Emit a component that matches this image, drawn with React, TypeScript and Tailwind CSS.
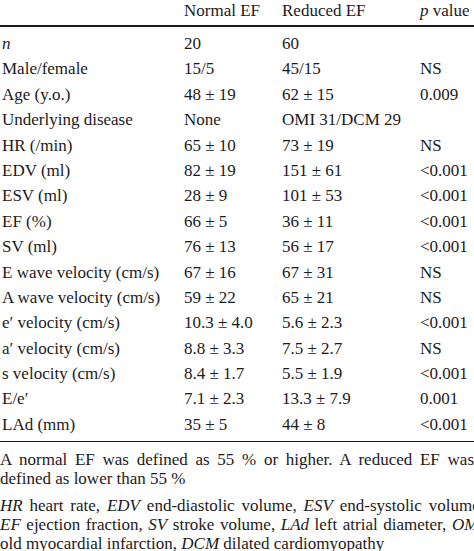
const rows: [string, string, string, string][] = [
  ["n", "20", "60", ""],
  ["Male/female", "15/5", "45/15", "NS"],
  ["Age (y.o.)", "48 ± 19", "62 ± 15", "0.009"],
  ["Underlying disease", "None", "OMI 31/DCM 29", ""],
  ["HR (/min)", "65 ± 10", "73 ± 19", "NS"],
  ["EDV (ml)", "82 ± 19", "151 ± 61", "<0.001"],
  ["ESV (ml)", "28 ± 9", "101 ± 53", "<0.001"],
  ["EF (%)", "66 ± 5", "36 ± 11", "<0.001"],
  ["SV (ml)", "76 ± 13", "56 ± 17", "<0.001"],
  ["E wave velocity (cm/s)", "67 ± 16", "67 ± 31", "NS"],
  ["A wave velocity (cm/s)", "59 ± 22", "65 ± 21", "NS"],
  ["e′ velocity (cm/s)", "10.3 ± 4.0", "5.6 ± 2.3", "<0.001"],
  ["a′ velocity (cm/s)", "8.8 ± 3.3", "7.5 ± 2.7", "NS"],
  ["s velocity (cm/s)", "8.4 ± 1.7", "5.5 ± 1.9", "<0.001"],
  ["E/e′", "7.1 ± 2.3", "13.3 ± 7.9", "0.001"],
  ["LAd (mm)", "35 ± 5", "44 ± 8", "<0.001"],
];

export default function App() {
  return (
    <div className="w-[474px] h-[551px] overflow-hidden bg-white text-[#1d1a1b] font-['Liberation_Serif',serif] text-[17px]">
      <div className="w-[484px] -mt-[3px]">
        <div className="grid grid-cols-[182px_98px_138px_1fr] pl-[2px] h-[28px] items-center">
          <div />
          <div>Normal EF</div>
          <div>Reduced EF</div>
          <div>
            <i>p</i> value
          </div>
        </div>
        <div className="h-[2px] bg-[#1d1a1b]" />
        <div className="pt-[4px] pb-[4px]">
          {rows.map((r, i) => (
            <div
              key={i}
              className="grid grid-cols-[182px_98px_138px_1fr] pl-[2px] h-[25.4px] items-center whitespace-nowrap"
            >
              <div>{i === 0 ? <i>n</i> : r[0]}</div>
              <div>{r[1]}</div>
              <div>{r[2]}</div>
              <div>{r[3]}</div>
            </div>
          ))}
        </div>
        <div className="h-px bg-[#1d1a1b]" />
        <div className="leading-[19px] pt-[8px]">
          <p className="text-justify w-[474px]">
            A normal EF was defined as 55 % or higher. A reduced EF was defined as lower than 55 %
          </p>
          <p className="text-justify mt-[8px]">
            <i>HR</i> heart rate, <i>EDV</i> end-diastolic volume, <i>ESV</i> end-systolic volume,{" "}
            <i>EF</i> ejection fraction, <i>SV</i> stroke volume, <i>LAd</i> left atrial diameter,{" "}
            <i>OMI</i> old myocardial infarction, <i>DCM</i> dilated cardiomyopathy
          </p>
        </div>
      </div>
    </div>
  );
}
